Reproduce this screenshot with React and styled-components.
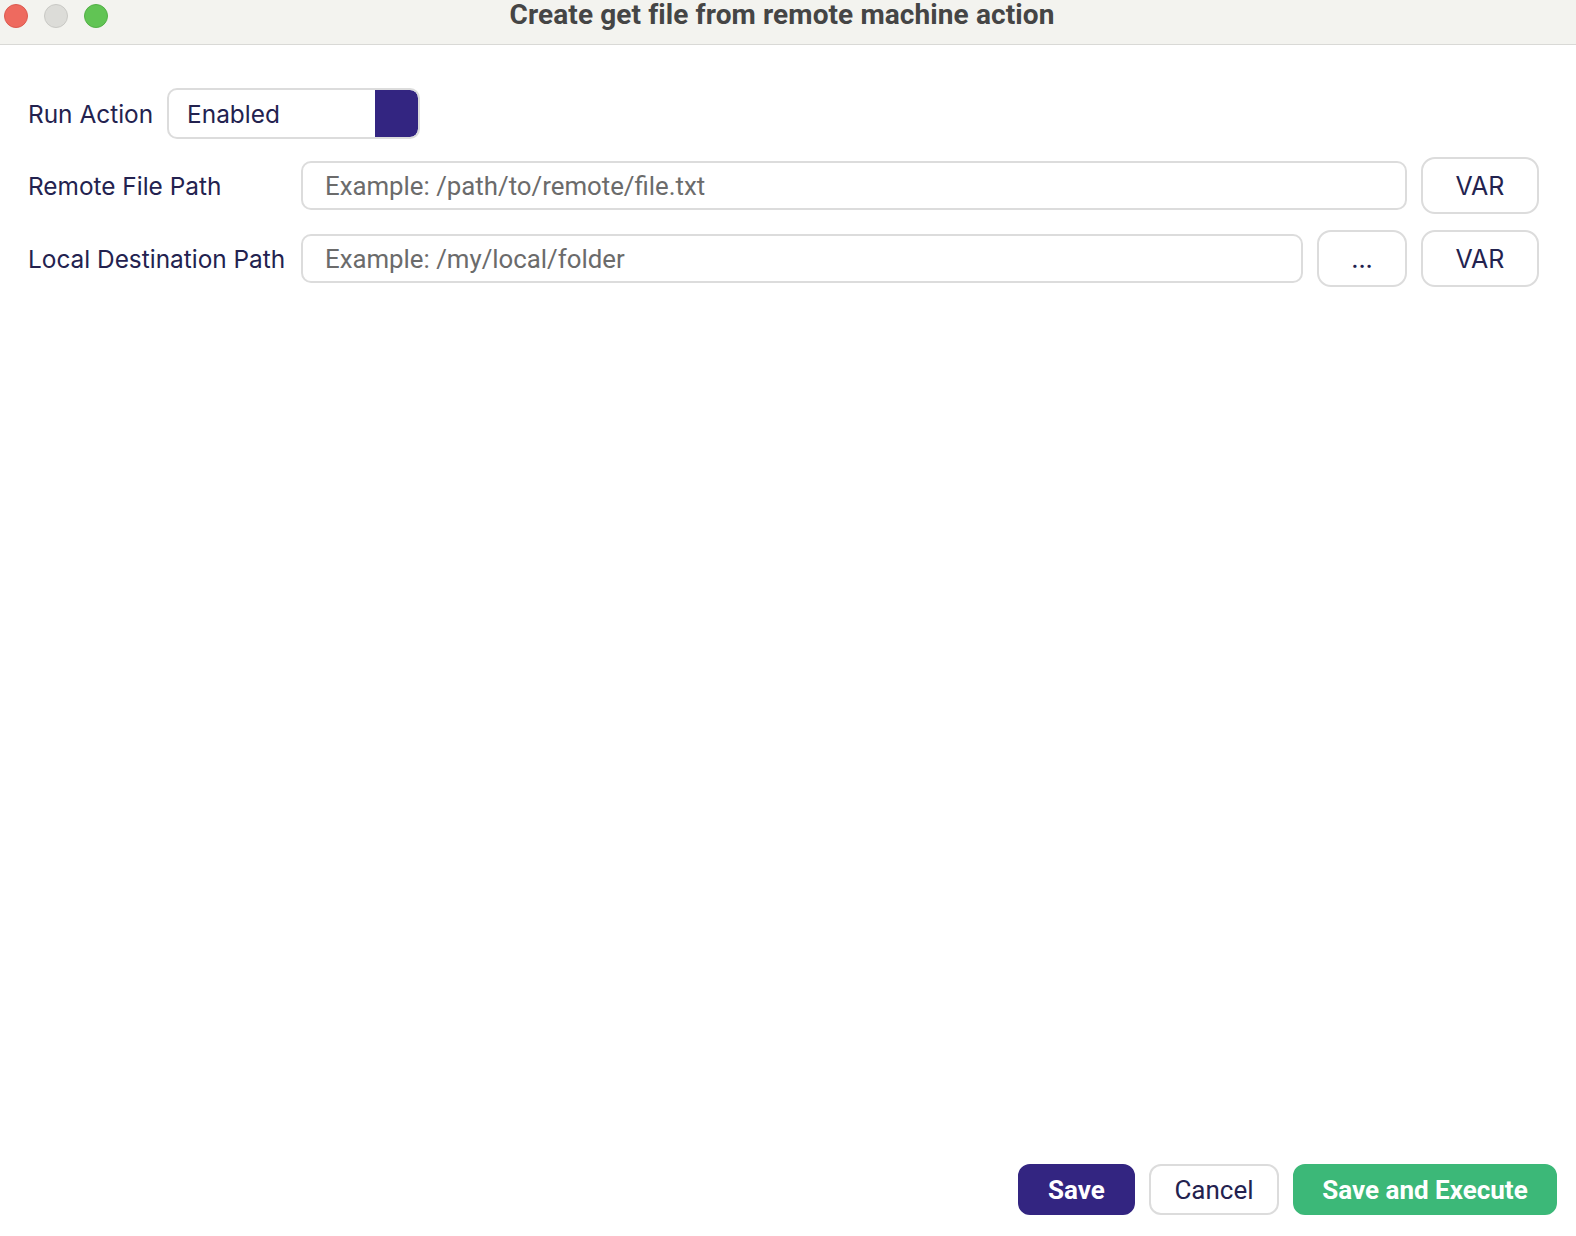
import React from "react";
import styled, { createGlobalStyle } from "styled-components";

const GlobalStyle = createGlobalStyle`
  html, body {
    margin: 0;
    padding: 0;
    background: #ffffff;
    overflow: hidden;
  }
  * {
    box-sizing: border-box;
  }
`;

const Window = styled.div`
  display: flex;
  flex-direction: column;
  width: 1576px;
  height: 1236px;
  background: #ffffff;
  font-family: Inter, "Noto Sans", sans-serif;
  color: #23224f;
`;

const TitleBar = styled.div`
  position: relative;
  display: flex;
  align-items: flex-start;
  justify-content: center;
  height: 45px;
  background: #f3f3ef;
  border-bottom: 1.5px solid #d9d9d6;
`;

const Lights = styled.div`
  position: absolute;
  left: 4px;
  top: 4px;
  display: flex;
  gap: 16px;
`;

const Light = styled.span`
  width: 24px;
  height: 24px;
  border-radius: 50%;
  background: ${(p) => p.color};
  border: 1px solid ${(p) => p.edge};
`;

const Title = styled.h1`
  margin: 0;
  padding-right: 12px;
  font-family: Roboto, "Liberation Sans", sans-serif;
  font-weight: 700;
  font-size: 28px;
  line-height: 30px;
  color: #454545;
  letter-spacing: 0.1px;
`;

const Content = styled.div`
  flex: 1;
  display: flex;
  flex-direction: column;
  gap: 16px;
  padding: 43px 37px 0 28px;
`;

const Row = styled.div`
  display: flex;
  align-items: center;
  gap: 14px;
  margin-bottom: ${(p) => p.$after || 0}px;
`;

const Label = styled.label`
  flex: none;
  width: ${(p) => (p.$wide ? "259px" : "auto")};
  font-size: 24.4px;
  color: #23224f;
  white-space: nowrap;
`;

const Toggle = styled.div`
  display: flex;
  align-items: stretch;
  width: 253px;
  height: 51px;
  border: 2px solid #dcdcdc;
  border-radius: 10px;
  overflow: hidden;
`;

const ToggleText = styled.span`
  flex: 1;
  display: flex;
  align-items: center;
  padding-left: 18px;
  font-size: 24.4px;
  color: #23224f;
`;

const ToggleKnob = styled.span`
  width: 43px;
  background: #332581;
  border-radius: 0 8px 8px 0;
`;

const PathInput = styled.input`
  flex: 1;
  min-width: 0;
  height: 49px;
  padding: 0 22px;
  border: 2px solid #dcdcdc;
  border-radius: 10px;
  font-family: Roboto, "Liberation Sans", sans-serif;
  font-size: 25.8px;
  color: #23224f;
  outline: none;

  &::placeholder {
    color: #6b6b6b;
  }
`;

const SideButton = styled.button`
  flex: none;
  width: ${(p) => p.$w}px;
  height: 57px;
  border: 2px solid #dcdcdc;
  border-radius: 14px;
  background: #ffffff;
  font-family: Inter, "Noto Sans", sans-serif;
  font-size: 25px;
  color: #23224f;
  cursor: pointer;
`;

const Footer = styled.div`
  display: flex;
  justify-content: flex-end;
  gap: 14px;
  padding: 0 19px 21px 0;
`;

const FooterButton = styled.button`
  width: ${(p) => p.$w}px;
  height: 51px;
  padding: 0;
  border-radius: 12px;
  border: 2px solid ${(p) => (p.$bg === "#ffffff" ? "#dcdcdc" : p.$bg)};
  background: ${(p) => p.$bg};
  color: ${(p) => (p.$bg === "#ffffff" ? "#23224f" : "#ffffff")};
  font-family: Roboto, "Liberation Sans", sans-serif;
  font-weight: ${(p) => (p.$bg === "#ffffff" ? 400 : 700)};
  font-size: 26px;
  cursor: pointer;
`;

export default function App() {
  return (
    <Window>
      <GlobalStyle />
      <TitleBar>
        <Lights>
          <Light color="#ee6a5f" edge="#dc5a50" />
          <Light color="#dcdcd8" edge="#c9c9c5" />
          <Light color="#61c454" edge="#52b046" />
        </Lights>
        <Title>Create get file from remote machine action</Title>
      </TitleBar>

      <Content>
        <Row $after={2}>
          <Label>Run Action</Label>
          <Toggle>
            <ToggleText>Enabled</ToggleText>
            <ToggleKnob />
          </Toggle>
        </Row>
        <Row>
          <Label $wide>Remote File Path</Label>
          <PathInput placeholder="Example: /path/to/remote/file.txt" />
          <SideButton $w={118}>VAR</SideButton>
        </Row>
        <Row>
          <Label $wide>Local Destination Path</Label>
          <PathInput placeholder="Example: /my/local/folder" />
          <SideButton $w={90}>...</SideButton>
          <SideButton $w={118}>VAR</SideButton>
        </Row>
      </Content>

      <Footer>
        <FooterButton $bg="#332581" $w={117}>Save</FooterButton>
        <FooterButton $bg="#ffffff" $w={130}>Cancel</FooterButton>
        <FooterButton $bg="#3cb878" $w={264}>Save and Execute</FooterButton>
      </Footer>
    </Window>
  );
}
